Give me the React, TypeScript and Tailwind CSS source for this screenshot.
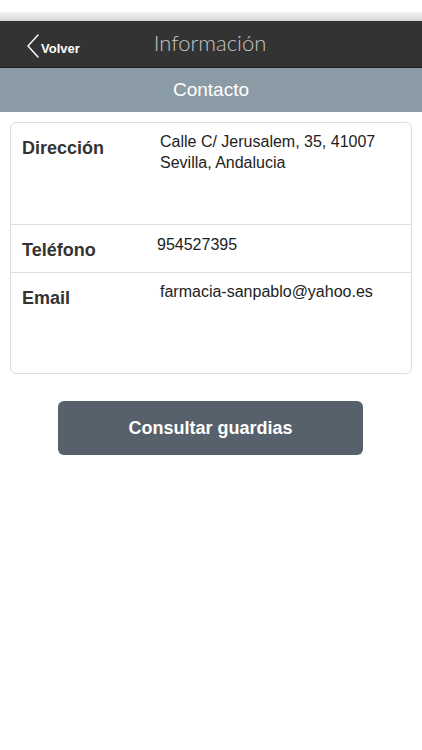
const rows = [
  { label: 'Dirección', value: ['Calle C/ Jerusalem, 35, 41007', 'Sevilla, Andalucia'], h: 'h-[101px]', pad: 'pt-[12px]', vt: 'pt-[8px]', vx: '' },
  { label: 'Teléfono', value: ['954527395'], h: 'h-[48px]', pad: 'pt-[12px]', vt: 'pt-[9px]', vx: '-ml-[3px]' },
  { label: 'Email', value: ['farmacia-sanpablo@yahoo.es'], h: 'h-[101px]', pad: 'pt-[12px]', vt: 'pt-[8px]', vx: '' },
];

export default function App() {
  return (
    <div className="w-[422px] h-[750px] bg-white font-['Liberation_Sans',Arial,sans-serif]">
      <div className="h-[12px] bg-white" />
      <div className="h-[9px] bg-gradient-to-b from-[#f4f4f4] to-[#d6d6d6]" />
      <header className="relative h-[47px] bg-[#333333] border-b border-[#1e1e1e] flex items-center justify-center">
        <button className="absolute left-[26px] top-[13px] flex items-center text-white">
          <svg width="14" height="24" viewBox="0 0 14 24" fill="none" stroke="white" strokeWidth="1.4" strokeLinecap="round" strokeLinejoin="round">
            <polyline points="12,1 2,12 12,23" />
          </svg>
          <span className="text-[13px] font-bold mt-[5px] ml-[1px]">Volver</span>
        </button>
        <h1 className="font-['Lato',sans-serif] font-light text-[22px] text-[#c4c4c4] -mt-[3px] mr-[2px]">Información</h1>
      </header>
      <div className="h-[44px] bg-[#8b9ba6] flex items-center justify-center text-white text-[19px] pt-[1px]">Contacto</div>
      <div className="mx-[10px] mt-[10px] border border-[#dedede] rounded-[6px]">
        {rows.map((r, i) => (
          <div key={r.label} className={`${r.h} flex ${i > 0 ? 'border-t border-[#e0e0e0]' : ''}`}>
            <div className={`w-[149px] shrink-0 pl-[11px] ${r.pad} text-[18px] font-bold text-[#333]`}>{r.label}</div>
            <div className={`${r.vt} ${r.vx} text-[16px] text-[#222] leading-[21px]`}>
              {r.value.map(v => <div key={v}>{v}</div>)}
            </div>
          </div>
        ))}
      </div>
      <div className="flex justify-center mt-[27px]">
        <button className="w-[305px] h-[54px] ml-[-1px] bg-[#56616b] rounded-[6px] text-white font-bold text-[18px]">Consultar guardias</button>
      </div>
    </div>
  );
}
